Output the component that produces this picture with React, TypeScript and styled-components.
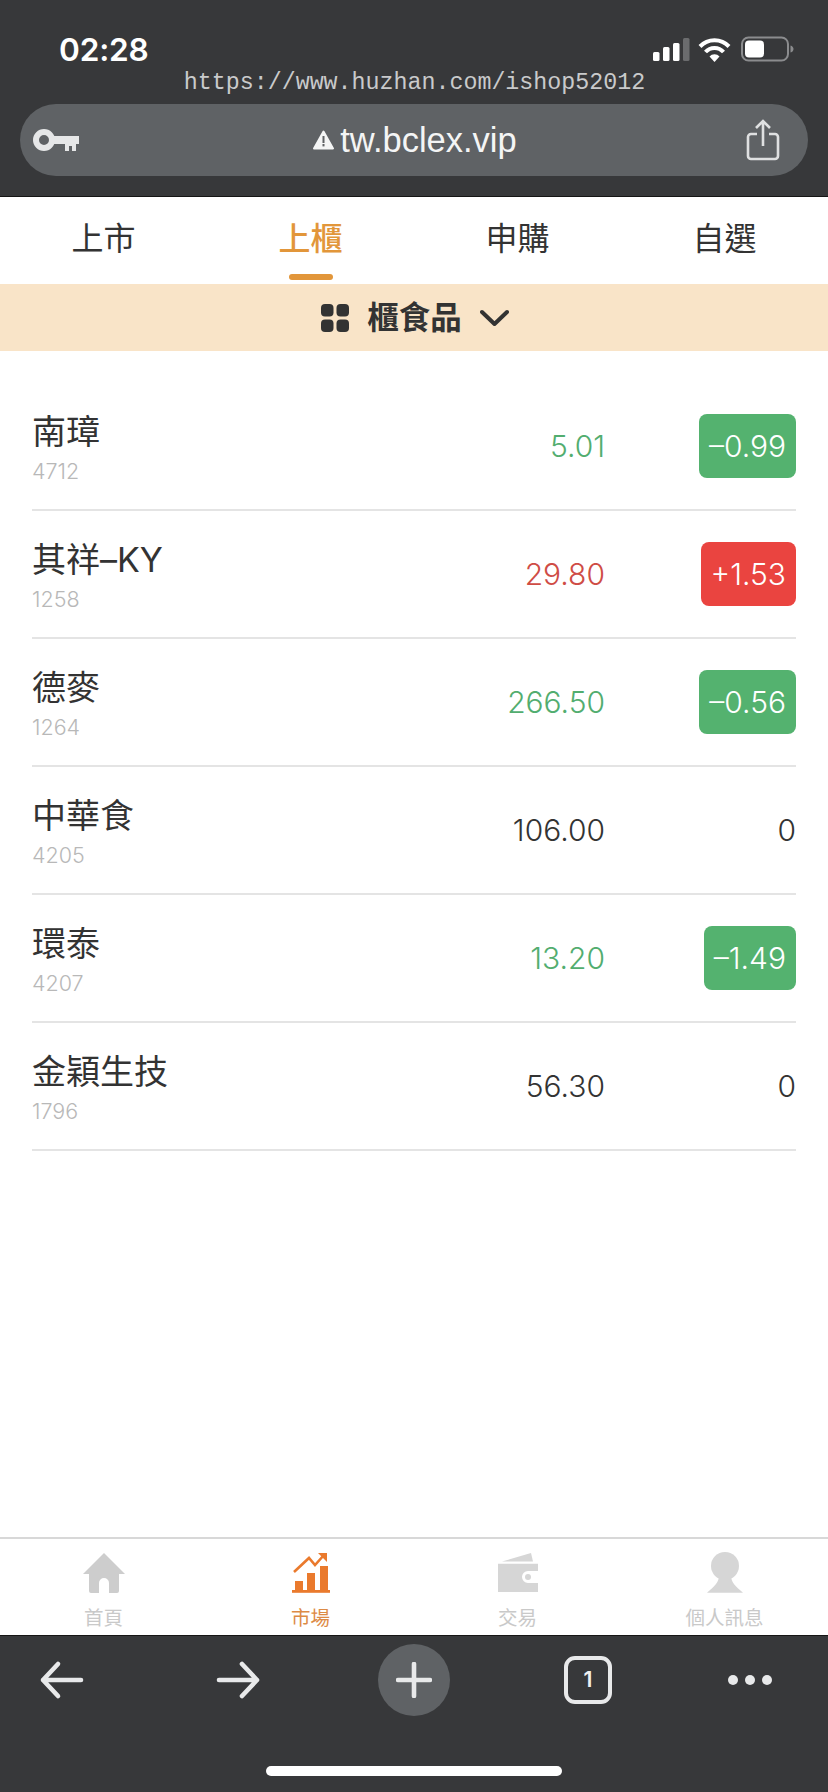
import React from "react";
import styled, { createGlobalStyle } from "styled-components";

const CJK = `"Noto Sans CJK TC", "Noto Sans CJK JP", sans-serif`;
const Latin = `"Liberation Sans", "Noto Sans CJK TC", sans-serif`;

const Global = createGlobalStyle`
  html, body { margin: 0; padding: 0; background: #fff; }
  * { box-sizing: border-box; }
`;

const Page = styled.div`
  width: 828px;
  height: 1792px;
  display: flex;
  flex-direction: column;
  overflow: hidden;
  background: #fff;
`;

const BrowserTop = styled.header`
  height: 197px;
  flex: none;
  background: #37383a;
  border-bottom: 1px solid #151515;
  padding: 33px 20px 0;
`;
const StatusBar = styled.div`
  height: 34px;
  display: flex;
  align-items: center;
  justify-content: space-between;
  padding: 0 12px 0 39px;
`;
const Clock = styled.span`
  font: 600 31.6px/34px Inter, ${Latin};
  color: #fff;
  letter-spacing: -0.2px;
`;
const StatusIcons = styled.svg`
  width: 144px;
  height: 30px;
  display: block;
`;
const Watermark = styled.div`
  height: 37px;
  font: 400 23.3px/32px "Liberation Mono", monospace;
  color: #c9cacb;
  text-align: center;
  padding-left: 1px;
  white-space: nowrap;
`;
const UrlBar = styled.div`
  height: 72px;
  border-radius: 36px;
  background: #5f6265;
  display: flex;
  align-items: center;
  justify-content: space-between;
  padding: 0 28px 0 13px;
`;
const UrlText = styled.div`
  display: flex;
  align-items: center;
  gap: 6px;
  font: 400 34.5px/38px ${Latin};
  color: #f4f5f5;
  margin-left: 5px;
`;

const Tabs = styled.nav`
  height: 87px;
  flex: none;
  display: grid;
  grid-template-columns: repeat(4, 207px);
`;
const Tab = styled.div<{ $active?: boolean }>`
  position: relative;
  text-align: center;
  font: ${(p) => (p.$active ? 500 : 400)} 32px/78px ${CJK};
  color: ${(p) => (p.$active ? "#e2963a" : "#333")};
  ${(p) =>
    p.$active
      ? `&::after { content: ""; position: absolute; left: 82px; bottom: 4px; width: 44px; height: 6px; border-radius: 3px; background: #e2963a; }`
      : ""}
`;
const CategoryBar = styled.div`
  height: 67px;
  flex: none;
  background: #f9e4c8;
  display: flex;
  align-items: center;
  justify-content: center;
  gap: 18px;
  padding-left: 2px;
`;
const CategoryLabel = styled.span`
  font: 700 31.5px/40px ${CJK};
  color: #333;
  margin-top: -5px;
`;
const Quotes = styled.main`
  flex: 1;
  padding: 32px 32px 0;
`;
const Row = styled.div`
  height: 128px;
  border-bottom: 2px solid #e4e4e4;
  display: grid;
  grid-template-columns: 1fr 200px 191px;
  align-items: center;
`;
const Name = styled.div`
  font: 400 34px/44px Inter, ${CJK};
  color: #333;
  margin-top: 1px;
`;
const Code = styled.div`
  font: 300 21.5px/26px Inter, ${Latin};
  color: #b8b8b8;
  margin-top: 4px;
`;
const toneColor = { up: "#cf4c45", down: "#52ad6f", flat: "#333" } as const;
type Tone = keyof typeof toneColor;
const Price = styled.div<{ $tone: Tone }>`
  text-align: right;
  font: 300 30px/40px Inter, ${Latin};
  color: ${(p) => toneColor[p.$tone]};
`;
const Change = styled.div<{ $tone: Tone }>`
  justify-self: end;
  height: 64px;
  border-radius: 8px;
  padding: 0 ${(p) => (p.$tone === "flat" ? 0 : 10)}px;
  display: flex;
  align-items: center;
  font: 300 30px/40px Inter, ${Latin};
  color: ${(p) => (p.$tone === "flat" ? "#333" : "#fff")};
  background: ${(p) =>
    p.$tone === "up" ? "#ea4440" : p.$tone === "down" ? "#54b26f" : "transparent"};
`;

const BottomNav = styled.nav`
  height: 98px;
  flex: none;
  border-top: 2px solid #d8d8d8;
  display: grid;
  grid-template-columns: repeat(4, 207px);
  background: #fff;
`;
const NavItem = styled.div<{ $active?: boolean }>`
  display: flex;
  flex-direction: column;
  align-items: center;
  padding-top: 12px;
  font: 400 19.5px/24px ${CJK};
  color: ${(p) => (p.$active ? "#dd8a45" : "#c9c9c9")};
`;
const NavIcon = styled.svg`
  width: 44px;
  height: 44px;
  display: block;
  margin-bottom: 10px;
`;

const Toolbar = styled.footer`
  height: 157px;
  flex: none;
  background: #37383a;
  border-top: 1px solid #151515;
`;
const Tools = styled.div`
  display: grid;
  grid-template-columns: 124px 228px 124px 224px 100px;
  justify-items: center;
  align-items: center;
  height: 88px;
`;
const ToolIcon = styled.svg`
  width: 48px;
  height: 48px;
  display: block;
`;
const PlusCircle = styled.div`
  width: 72px;
  height: 72px;
  border-radius: 50%;
  background: #5f6265;
  display: flex;
  align-items: center;
  justify-content: center;
`;
const TabCount = styled.div`
  width: 48px;
  height: 48px;
  border: 4px solid #e8e9ea;
  border-radius: 11px;
  display: flex;
  align-items: center;
  justify-content: center;
  font: 600 21px/24px Inter, ${Latin};
  color: #f0f0f0;
`;
const HomeBar = styled.div`
  width: 296px;
  height: 10px;
  border-radius: 5px;
  background: #fff;
  margin: 42px auto 0;
`;

const rows: { name: string; code: string; price: string; change: string; tone: Tone }[] = [
  { name: "南璋", code: "4712", price: "5.01", change: "–0.99", tone: "down" },
  { name: "其祥–KY", code: "1258", price: "29.80", change: "+1.53", tone: "up" },
  { name: "德麥", code: "1264", price: "266.50", change: "–0.56", tone: "down" },
  { name: "中華食", code: "4205", price: "106.00", change: "0", tone: "flat" },
  { name: "環泰", code: "4207", price: "13.20", change: "–1.49", tone: "down" },
  { name: "金穎生技", code: "1796", price: "56.30", change: "0", tone: "flat" },
];

export default function App() {
  return (
    <Page>
      <Global />
      <BrowserTop>
        <StatusBar>
          <Clock>02:28</Clock>
          <StatusIcons viewBox="0 0 144 30">
            <rect x="1" y="17" width="6.5" height="9" rx="1.5" fill="#fff" />
            <rect x="11" y="12" width="6.5" height="14" rx="1.5" fill="#fff" />
            <rect x="21" y="8" width="6.5" height="18" rx="1.5" fill="#fff" />
            <rect x="31" y="3" width="6.5" height="23" rx="1.5" fill="#6b6c6e" />
            <path d="M48 11.5a20 20 0 0 1 29 0" fill="none" stroke="#fff" strokeWidth="4" />
            <path d="M53.5 17a12 12 0 0 1 18 0" fill="none" stroke="#fff" strokeWidth="4" />
            <path d="M57.5 21.5a6.5 6.5 0 0 1 10 0L62.5 27z" fill="#fff" />
            <rect x="90" y="2.5" width="46" height="23" rx="6.5" fill="none" stroke="#8b8c8e" strokeWidth="2" />
            <rect x="93" y="5.5" width="19" height="17" rx="4" fill="#fff" />
            <path d="M138.5 10.5c2 .5 3 2 3 3.5s-1 3-3 3.5z" fill="#8b8c8e" />
          </StatusIcons>
        </StatusBar>
        <Watermark>https://www.huzhan.com/ishop52012</Watermark>
        <UrlBar>
          <svg width="46" height="24" viewBox="0 0 46 24">
            <circle cx="11" cy="12" r="8" fill="none" stroke="#e6e7e8" strokeWidth="6" />
            <path d="M19 8h27v8h-3v7h-4v-5h-3v5h-4v-7H19z" fill="#e6e7e8" />
          </svg>
          <UrlText>
            <svg width="21" height="20" viewBox="0 0 21 20">
              <path d="M10.5 1.5 20 18.5H1z" fill="#f4f5f5" stroke="#f4f5f5" strokeWidth="2" strokeLinejoin="round" />
              <rect x="9.5" y="6" width="2" height="7" fill="#5f6265" />
              <rect x="9.5" y="14" width="2" height="2.4" fill="#5f6265" />
            </svg>
            tw.bclex.vip
          </UrlText>
          <svg width="34" height="42" viewBox="0 0 34 42">
            <path d="M11 15H5a3 3 0 0 0-3 3v19a3 3 0 0 0 3 3h24a3 3 0 0 0 3-3V18a3 3 0 0 0-3-3h-6" fill="none" stroke="#dfe0e1" strokeWidth="2.6" />
            <path d="M17 27V2M10 9l7-7 7 7" fill="none" stroke="#dfe0e1" strokeWidth="2.6" />
          </svg>
        </UrlBar>
      </BrowserTop>

      <Tabs>
        <Tab>上市</Tab>
        <Tab $active>上櫃</Tab>
        <Tab>申購</Tab>
        <Tab>自選</Tab>
      </Tabs>
      <CategoryBar>
        <svg width="28" height="28" viewBox="0 0 28 28">
          <rect x="0" y="0" width="12.5" height="12.5" rx="4" fill="#333" />
          <rect x="15.5" y="0" width="12.5" height="12.5" rx="4" fill="#333" />
          <rect x="0" y="15.5" width="12.5" height="12.5" rx="4" fill="#333" />
          <rect x="15.5" y="15.5" width="12.5" height="12.5" rx="4" fill="#333" />
        </svg>
        <CategoryLabel>櫃食品</CategoryLabel>
        <svg width="29" height="18" viewBox="0 0 29 18">
          <path d="M2 3l12.5 12L27 3" fill="none" stroke="#333" strokeWidth="4" strokeLinecap="round" strokeLinejoin="round" />
        </svg>
      </CategoryBar>

      <Quotes>
        {rows.map((r) => (
          <Row key={r.code}>
            <div>
              <Name>{r.name}</Name>
              <Code>{r.code}</Code>
            </div>
            <Price $tone={r.tone}>{r.price}</Price>
            <Change $tone={r.tone}>{r.change}</Change>
          </Row>
        ))}
      </Quotes>

      <BottomNav>
        <NavItem>
          <NavIcon viewBox="0 0 44 44">
            <path d="M22 2 43 23H37V40a2 2 0 0 1-2 2H27V32a5 5 0 0 0-10 0V42H9a2 2 0 0 1-2-2V23H1z" fill="#cdcdcd" />
          </NavIcon>
          首頁
        </NavItem>
        <NavItem $active>
          <NavIcon viewBox="0 0 44 44">
            <path d="M5 21 20 7l6 7L35 4" fill="none" stroke="#ea7a2d" strokeWidth="2.6" />
            <path d="M29 2h9v9z" fill="#ea7a2d" />
            <rect x="6" y="30" width="8" height="10" fill="#ea7a2d" />
            <rect x="18" y="22" width="8" height="18" fill="#ea7a2d" />
            <rect x="31" y="15" width="8" height="25" fill="#ea7a2d" />
            <rect x="3" y="39" width="38" height="2.8" fill="#ea7a2d" />
          </NavIcon>
          市場
        </NavItem>
        <NavItem>
          <NavIcon viewBox="0 0 44 44">
            <path d="M6 10.5 35 2l2 8.5z" fill="#d6d6d6" />
            <path d="M2 12.7h40V20H32a6 6 0 0 0 0 12h10v9H2z" fill="#d6d6d6" />
            <circle cx="32" cy="26" r="3" fill="#d6d6d6" />
          </NavIcon>
          交易
        </NavItem>
        <NavItem>
          <NavIcon viewBox="0 0 44 44">
            <circle cx="22" cy="15" r="14" fill="#d6d6d6" />
            <path d="M16 26h12c1 6 4 9 12 15.7H4C12 35 15 32 16 26z" fill="#d6d6d6" />
          </NavIcon>
          個人訊息
        </NavItem>
      </BottomNav>

      <Toolbar>
        <Tools>
          <ToolIcon viewBox="0 0 48 48">
            <path d="M43 24H5M20 8 5 24l15 16" fill="none" stroke="#e8e9ea" strokeWidth="4.6" strokeLinecap="round" strokeLinejoin="round" />
          </ToolIcon>
          <ToolIcon viewBox="0 0 48 48">
            <path d="M5 24h38M28 8l15 16-15 16" fill="none" stroke="#e8e9ea" strokeWidth="4.6" strokeLinecap="round" strokeLinejoin="round" />
          </ToolIcon>
          <PlusCircle>
            <svg width="36" height="36" viewBox="0 0 36 36">
              <path d="M18 2v32M2 18h32" stroke="#e8e9ea" strokeWidth="4.6" strokeLinecap="round" />
            </svg>
          </PlusCircle>
          <TabCount>1</TabCount>
          <svg width="46" height="12" viewBox="0 0 46 12">
            <circle cx="6" cy="6" r="5" fill="#e8e9ea" />
            <circle cx="23" cy="6" r="5" fill="#e8e9ea" />
            <circle cx="40" cy="6" r="5" fill="#e8e9ea" />
          </svg>
        </Tools>
        <HomeBar />
      </Toolbar>
    </Page>
  );
}
